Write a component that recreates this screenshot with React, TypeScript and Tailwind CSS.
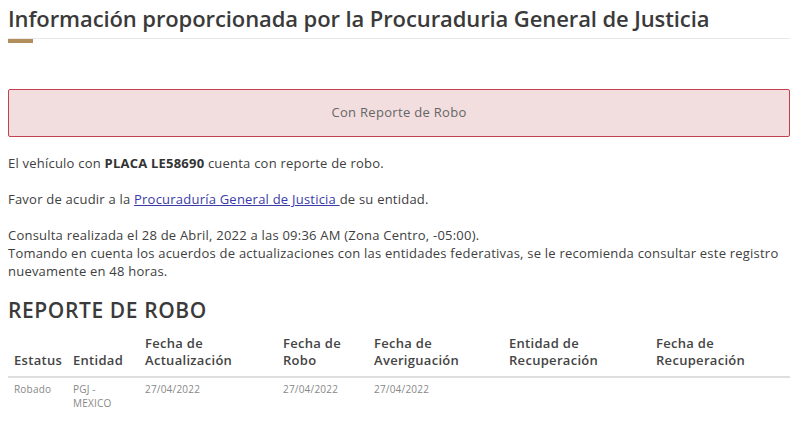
const COLS = [
  { label: ["", "Estatus"], w: "w-[59px]" },
  { label: ["", "Entidad"], w: "w-[72px]" },
  { label: ["Fecha de", "Actualización"], w: "w-[138px]" },
  { label: ["Fecha de", "Robo"], w: "w-[91px]" },
  { label: ["Fecha de", "Averiguación"], w: "w-[135px]" },
  { label: ["Entidad de", "Recuperación"], w: "w-[147px]" },
  { label: ["Fecha de", "Recuperación"], w: "flex-1" },
]

const ROW = ["Robado", "PGJ - MEXICO", "27/04/2022", "27/04/2022", "27/04/2022", "", ""]

export default function App() {
  return (
    <div className="min-h-[437px] bg-white pl-2 pr-[10px] font-['Open_Sans',sans-serif] text-[#404041]">
      {/* Title */}
      <h2 className="pt-[3px] text-[22px] leading-[30px] font-semibold tracking-[-0.1px] text-[#3a3a3a]">
        Información proporcionada por la Procuraduria General de Justicia
      </h2>
      <div className="mt-[5px] border-t border-[#e8e8e8]">
        <div className="h-[4px] w-[25px] bg-[#b38e5d]" />
      </div>

      {/* Alert */}
      <div className="mt-[46px] flex h-[48px] items-center justify-center rounded-[2px] border border-[#c4404e] bg-[#f2dede] text-[13px] tracking-[0.3px] text-[#666]">
        Con Reporte de Robo
      </div>

      {/* Details */}
      <div className="mt-[17px] text-[13px] leading-[18px] tracking-[0.22px]">
        <p>
          El vehículo con <b className="font-bold text-[#333]">PLACA LE58690</b> cuenta con reporte de robo.
        </p>
        <p className="mt-[18px]">
          Favor de acudir a la{" "}
          <a href="#" className="text-[#3a3aa8] underline">
            Procuraduría General de Justicia{" "}
          </a>
          de su entidad.
        </p>
        <p className="mt-[18px]">
          Consulta realizada el 28 de Abril, 2022 a las 09:36 AM (Zona Centro, -05:00).
          <br />
          Tomando en cuenta los acuerdos de actualizaciones con las entidades federativas, se le recomienda consultar este registro nuevamente en 48 horas.
        </p>
      </div>

      {/* Report */}
      <h3 className="mt-[16px] text-[21px] leading-[28px] font-semibold tracking-[0.6px] text-[#3a3a3a]">REPORTE DE ROBO</h3>

      <div className="mt-[11px]">
        <div className="flex border-b-2 border-[#dedede] pb-[7px] pl-[6px] text-[13px] leading-[17px] font-semibold tracking-[0.3px] text-[#444]">
          {COLS.map((c, i) => (
            <div key={i} className={`${c.w} shrink-0`}>
              <div className="h-[17px]">{c.label[0]}</div>
              <div>{c.label[1]}</div>
            </div>
          ))}
        </div>
        <div className="flex pt-[4px] pl-[6px] text-[10px] leading-[14px] tracking-[0.2px] text-[#888]">
          {ROW.map((v, i) => (
            <div key={i} className={`${COLS[i].w} shrink-0 pr-[14px]`}>
              {v}
            </div>
          ))}
        </div>
      </div>
    </div>
  )
}
